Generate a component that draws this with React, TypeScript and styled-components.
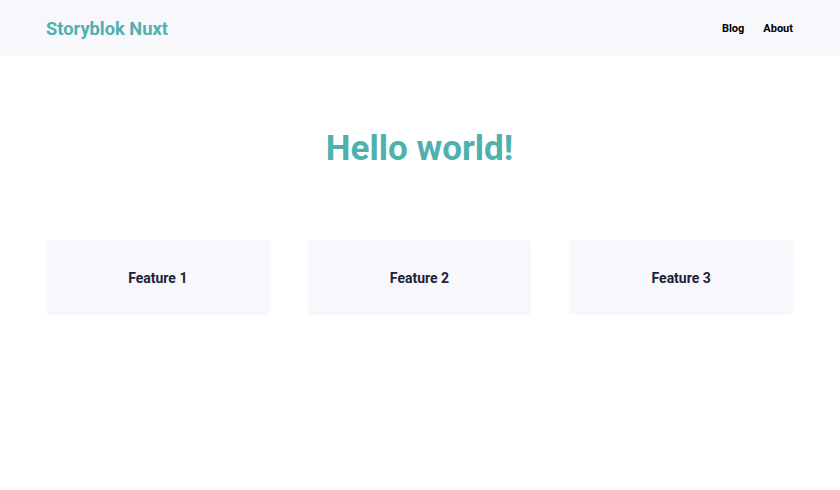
import React from "react";
import styled, { createGlobalStyle } from "styled-components";

const Global = createGlobalStyle`
  html, body { margin: 0; padding: 0; background: #ffffff; }
  body { font-family: Roboto, "Liberation Sans", sans-serif; -webkit-font-smoothing: antialiased; }
  * { box-sizing: border-box; }
`;

const Header = styled.header`
  height: 56px;
  background: #f7f7fc;
`;

const HeaderInner = styled.div`
  height: 100%;
  padding: 0 47px 0 46px;
  display: flex;
  align-items: center;
  justify-content: space-between;
`;

const Logo = styled.a`
  font-size: 18.3px;
  font-weight: 700;
  color: #50b0ae;
  text-decoration: none;
`;

const Nav = styled.nav`
  display: flex;
  gap: 19px;
`;

const NavLink = styled.a`
  font-size: 11px;
  font-weight: 700;
  color: #000;
  text-decoration: none;
`;

const Main = styled.main`
  padding: 73px 47px 0 46px;
`;

const Title = styled.h1`
  margin: 0;
  text-align: center;
  font-size: 35px;
  line-height: 40px;
  font-weight: 700;
  color: #50b0ae;
`;

const Grid = styled.div`
  margin-top: 71px;
  display: grid;
  grid-template-columns: repeat(3, 1fr);
  gap: 38px;
`;

const Card = styled.div`
  height: 75px;
  background: #f7f7fc;
  border-radius: 4px;
  display: flex;
  align-items: center;
  justify-content: center;
`;

const CardTitle = styled.h2`
  margin: 0;
  font-size: 14px;
  font-weight: 700;
  color: #1b2238;
`;

export default function App() {
  return (
    <>
      <Global />
      <Header>
        <HeaderInner>
          <Logo href="#">Storyblok Nuxt</Logo>
          <Nav>
            <NavLink href="#">Blog</NavLink>
            <NavLink href="#">About</NavLink>
          </Nav>
        </HeaderInner>
      </Header>
      <Main>
        <Title>Hello world!</Title>
        <Grid>
          {["Feature 1", "Feature 2", "Feature 3"].map((f) => (
            <Card key={f}>
              <CardTitle>{f}</CardTitle>
            </Card>
          ))}
        </Grid>
      </Main>
    </>
  );
}
